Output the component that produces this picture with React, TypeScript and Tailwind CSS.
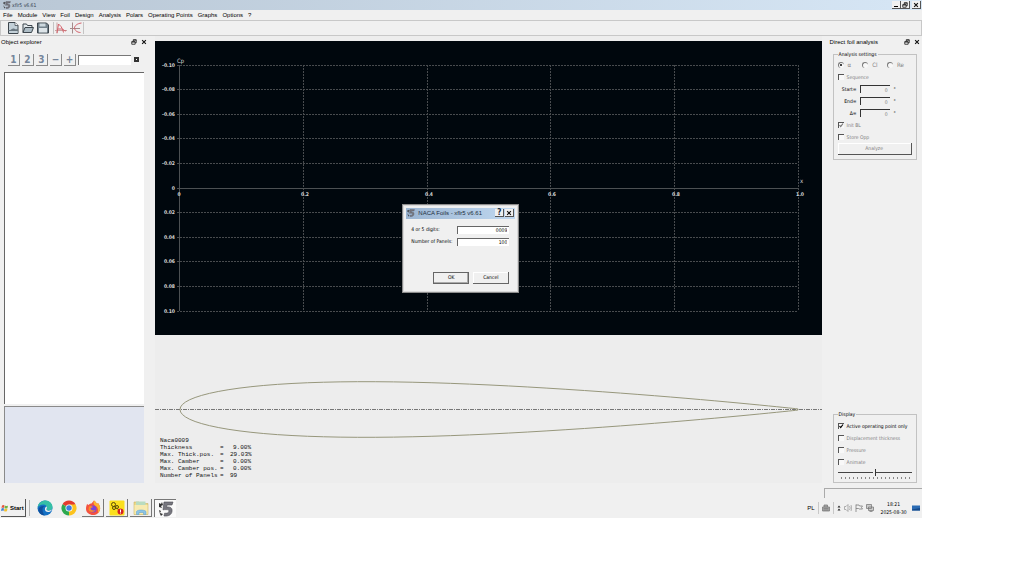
import { useState } from "react";
import type { ReactNode } from "react";
import { clsx } from "clsx";

const menuItems = ["File", "Module", "View", "Foil", "Design", "Analysis", "Polars", "Operating Points", "Graphs", "Options", "?"];

const foilInfo = [
  { label: "Thickness", value: "9.00%" },
  { label: "Max. Thick.pos.", value: "29.03%" },
  { label: "Max. Camber", value: "0.00%" },
  { label: "Max. Camber pos.", value: "0.00%" },
  { label: "Number of Panels", value: "99", left: true },
];

// graph geometry
const gridX = [25, 148, 272, 395, 519, 643];
const gridY = [24, 48, 73, 97, 122, 147, 171, 196, 220, 245, 270];
const labelsX = ["0", "0.2", "0.4", "0.6", "0.8", "1.0"];
const labelsY = ["-0.10", "-0.08", "-0.06", "-0.04", "-0.02", "0", "0.02", "0.04", "0.06", "0.08", "0.10"];

// NACA 4 digit symmetric thickness distribution
function nacaPath(thickness: number, x0: number, y0: number, chord: number) {
  const half = (x: number) =>
    5 * thickness * (0.2969 * Math.sqrt(x) - 0.126 * x - 0.3516 * x ** 2 + 0.2843 * x ** 3 - 0.1015 * x ** 4);
  const upper: string[] = [];
  const lower: string[] = [];
  for (let i = 0; i <= 50; i++) {
    const x = (1 - Math.cos((Math.PI * i) / 50)) / 2;
    const px = (x0 + x * chord).toFixed(2);
    upper.unshift(`${px} ${(y0 - half(x) * chord).toFixed(2)}`);
    lower.push(`${px} ${(y0 + half(x) * chord).toFixed(2)}`);
  }
  return `M${upper.concat(lower).join("L")}Z`;
}

function AppIcon({ className }: { className?: string }) {
  return (
    <svg viewBox="0 0 16 16" className={className} aria-hidden="true">
      <path d="M6 1h9l-1 3H9L8.500 6c4-.5 6 1 5.500 4.500C13.500 14 10 15.500 6 15l.6-2.800c2.400.3 4-.2 4.300-1.900.3-1.600-1.200-2-5.900-1.500z" fill="#77777f" stroke="#4a4a50" strokeWidth=".6" />
      <path d="M1 2l2 1 1-2 1 3-2 1 1 2-3-1zM1 9l2 1-1 2 3 1-2 2-1-2z" fill="#333" />
    </svg>
  );
}

function RestoreGlyph({ className }: { className?: string }) {
  return (
    <svg viewBox="0 0 8 8" className={className} aria-hidden="true">
      <path d="M3 3V1h4v4H5.500M3 1.500h4M1 3.500h4.500V7H1zM1 4h4.500" fill="none" stroke="#111" strokeWidth="1" />
    </svg>
  );
}

function CloseGlyph({ className }: { className?: string }) {
  return (
    <svg viewBox="0 0 8 8" className={className} aria-hidden="true">
      <path d="M1.500 1.500l5 5M6.500 1.500l-5 5" stroke="#111" strokeWidth="1.500" />
    </svg>
  );
}

function CaptionButton({ label, children }: { label: string; children: ReactNode }) {
  return (
    <button
      aria-label={label}
      className="flex h-2 w-[9px] items-center justify-center border-r border-b border-[#555] bg-[#f0f0f0] text-[8px] leading-none font-bold"
    >
      {children}
    </button>
  );
}

function DockHeader({ title }: { title: string }) {
  return (
    <div className="flex h-3 items-center gap-1 pl-[1px] font-['Liberation_Sans',sans-serif] text-[6px]">
      <h2 className="flex-1 whitespace-nowrap">{title}</h2>
      <button aria-label={`Float ${title}`}>
        <RestoreGlyph className="size-[6px]" />
      </button>
      <button aria-label={`Close ${title}`}>
        <CloseGlyph className="size-[6px]" />
      </button>
    </div>
  );
}

function Check({ label, checked = false, disabled = true }: { label: string; checked?: boolean; disabled?: boolean }) {
  return (
    <label className={clsx("flex h-3 items-center gap-[3px] whitespace-nowrap", disabled ? "text-[#808080]" : "text-black")}>
      <span className="relative flex">
        <input
          type="checkbox"
          defaultChecked={checked}
          disabled={disabled}
          className="peer size-[6px] appearance-none border-t border-l border-[#555] bg-[#f8f8f8]"
        />
        <svg viewBox="0 0 6 6" className="pointer-events-none absolute inset-0 hidden size-[6px] peer-checked:block">
          <path d="M1.500 3l1.200 1.500L5 1.500" fill="none" stroke={disabled ? "#777" : "#000"} strokeWidth="1.200" />
        </svg>
      </span>
      {label}
    </label>
  );
}

function Radio({ label, checked = false }: { label: string; checked?: boolean }) {
  return (
    <label className="flex flex-1 items-center gap-1 text-[6px] text-[#808080]">
      <span className="relative flex">
        <input
          type="radio"
          name="analysis-type"
          defaultChecked={checked}
          disabled
          className="peer size-[6px] appearance-none rounded-full border-t border-l border-[#777] bg-[#f8f8f8]"
        />
        <span className="absolute top-[2px] left-[2px] hidden size-[2px] bg-[#444] peer-checked:block" />
      </span>
      {label}
    </label>
  );
}

function DegreeField({ label }: { label: string }) {
  return (
    <div className="flex h-3 items-center gap-[3px]">
      <label htmlFor={label} className="w-[19px] text-right">{label}=</label>
      <input
        id={label}
        disabled
        defaultValue="0"
        className="h-2 w-[30px] border-t border-l border-[#333] bg-[#f0f0f0] px-[2px] text-right text-[#808080]"
      />
      <span className="pl-[1px]">°</span>
    </div>
  );
}

function TitleBar() {
  return (
    <header className="flex h-[10px] items-center gap-[1px] bg-linear-to-r from-[#b9c7d5] to-[#d6e6f5] pr-[1px] pl-[3px] text-[#33404d]">
      <AppIcon className="size-2" />
      <h1 className="flex-1">xflr5 v6.61</h1>
      <div className="flex">
        <CaptionButton label="Minimize">
          <span className="mt-1 h-[1px] w-1 bg-black" />
        </CaptionButton>
        <CaptionButton label="Restore"><RestoreGlyph className="size-[6px]" /></CaptionButton>
        <span className="w-[2px]" />
        <CaptionButton label="Close"><CloseGlyph className="size-[6px]" /></CaptionButton>
      </div>
    </header>
  );
}

function ToolBar() {
  return (
    <div className="flex h-4 items-center border border-[#c8c8c8] pl-[6px]">
      <div className="flex items-center gap-[3px] border-r border-[#c4c4c4] pr-1">
        <button aria-label="New">
          <svg viewBox="0 0 24 24" className="size-3">
            <path d="M3 1h13l6 6v16H3z" fill="#c3d0d8" stroke="#3d464d" strokeWidth="2" />
            <path d="M16 1v6h6" fill="#fff" stroke="#3d464d" strokeWidth="1.500" />
            <path d="M3 16c5 1 7-4 11-3 3 2 5 2 8 1v4H3z" fill="#69767f" />
            <path d="M4 18h17v4H4z" fill="#c3d0d8" />
          </svg>
        </button>
        <button aria-label="Open">
          <svg viewBox="0 0 24 24" className="size-3">
            <path d="M2 21V4h7l2 3h9v4" fill="#e3e9ec" stroke="#3d464d" strokeWidth="2" />
            <path d="M2 21l4-10h17l-4 10z" fill="#aebdc6" stroke="#3d464d" strokeWidth="2" />
          </svg>
        </button>
        <button aria-label="Save">
          <svg viewBox="0 0 24 24" className="size-3">
            <path d="M1 2h18l4 4v16H1z" fill="#75838d" stroke="#3d464d" strokeWidth="2" />
            <path d="M5 3h12v6H5z" fill="#cdd8de" />
            <path d="M4 12h16v9H4z" fill="#dde4e8" />
          </svg>
        </button>
      </div>
      <div className="flex items-center gap-[3px] border-r border-[#c4c4c4] pr-[1px] pl-[1px]">
        <button aria-label="Operating points">
          <svg viewBox="0 0 24 24" className="size-3" fill="none" strokeWidth="2">
            <path d="M4 1v22M0 17h24" stroke="#c9a3a3" />
            <path d="M4 22L7 4l5 5c3 6 5 8 10 9M6 14h9l2 7" stroke="#d4606a" />
          </svg>
        </button>
        <button aria-label="Polars">
          <svg viewBox="0 0 24 24" className="size-3" fill="none" strokeWidth="2">
            <path d="M5 1v22M0 13h20" stroke="#a58a8a" />
            <path d="M23 2C14 3 9 8 9 12s5 9 12 9" stroke="#d4606a" />
          </svg>
        </button>
      </div>
    </div>
  );
}

function ObjectExplorer() {
  return (
    <aside className="flex w-[155px] flex-col">
      <div className="w-[147px]">
        <DockHeader title="Object explorer" />
      </div>
      <div className="mt-[5px] flex h-[13px] items-center gap-[2px] pl-2">
        {["1", "2", "3", "−", "+"].map((item) => (
          <button
            key={item}
            className="h-3 w-3 border-r border-b border-[#8b8b8b] text-[10px] leading-[11px] font-bold text-[#75859b]"
          >
            {item}
          </button>
        ))}
        <input aria-label="Filter" className="h-[10px] w-[53px] border-t border-l border-[#777] bg-white px-1" />
        <button aria-label="Clear filter" className="ml-[1px] flex size-[5px] items-center justify-center bg-[#333]">
          <span className="size-[1px] bg-white" />
        </button>
      </div>
      <div className="mt-[6px] ml-1 w-[140px] flex-1 border-t border-l border-[#666] bg-white" />
      <div className="mt-[2px] ml-1 h-[77px] w-[140px] border-t border-l border-[#8a8a8a] bg-[#e1e5f0]" />
    </aside>
  );
}

function CpGraph() {
  return (
    <svg
      viewBox="0 0 667 294"
      preserveAspectRatio="xMinYMin slice"
      className="h-[294px] w-full bg-[#00070d] text-[5px] font-bold"
      role="img"
      aria-label="Cp graph"
    >
      <g stroke="#484b4e" strokeWidth="1" strokeDasharray="2 1" shapeRendering="crispEdges">
        {gridY.map((y, i) => (i === 5 ? null : <path key={y} d={`M22 ${y + 0.5}H643`} />))}
        {gridX.slice(1).map((x) => <path key={x} d={`M${x + 0.5} 24V270`} />)}
      </g>
      <path d="M24.500 24V270M22 147.500H643" stroke="#4c5052" shapeRendering="crispEdges" />
      <g fill="#d6d6d6">
        {gridY.map((y, i) => (
          <text key={y} x={20} y={y + 2} textAnchor="end">{labelsY[i]}</text>
        ))}
        {gridX.map((x, i) => (
          <text key={x} x={i === 0 ? x - 1 : x + 2} y={155} textAnchor="middle">{labelsX[i]}</text>
        ))}
        <text x={22} y={22} className="text-[6px] font-normal">Cp</text>
        <text x={645} y={142} className="text-[6px] font-normal">x</text>
      </g>
    </svg>
  );
}

function FoilView() {
  return (
    <section className="flex-1">
      <svg viewBox="0 0 667 102" preserveAspectRatio="xMinYMin slice" className="h-[102px] w-full overflow-visible" role="img" aria-label="NACA 0009">
        <path d="M0 74.500H667" stroke="#777" strokeDasharray="4 1 1 1" shapeRendering="crispEdges" />
        <path d={nacaPath(0.09, 25, 74.5, 618)} fill="none" stroke="#97977c" strokeWidth="1" />
      </svg>
      <div className="pl-[5px] font-['Liberation_Mono',monospace] text-[6px] leading-[7px] text-[#111]">
        <p>Naca0009</p>
        {foilInfo.map(({ label, value, left }) => (
          <p key={label} className="flex">
            <span className="w-[60px]">{label}</span>
            <span className="w-[10px]">=</span>
            <span className={clsx("w-[21px]", !left && "text-right")}>{value}</span>
          </p>
        ))}
      </div>
    </section>
  );
}

function AnalysisDock() {
  const [speed, setSpeed] = useState(50);

  return (
    <aside className="flex w-[100px] flex-col pr-[2px] pl-[7px]">
      <DockHeader title="Direct foil analysis" />
      <fieldset className="mt-[2px] mr-[3px] ml-1 border border-[#c2c2c2] px-1 pt-[1px] pb-1">
        <legend className="h-2 px-[1px] leading-2">Analysis settings</legend>
        <div className="flex h-3 items-center">
          <Radio label="α" checked />
          <Radio label="Cl" />
          <Radio label="Re" />
        </div>
        <Check label="Sequence" />
        <DegreeField label="Start" />
        <DegreeField label="End" />
        <DegreeField label="Δ" />
        <Check label="Init BL" checked />
        <Check label="Store Opp" />
        <button disabled className="block h-3 w-full border-r border-b border-[#555] text-[#808080] shadow-[inset_1px_1px_#ffffff]">
          Analyze
        </button>
      </fieldset>
      <fieldset className="mt-auto mr-[3px] ml-1 border border-[#c2c2c2] px-1 pt-[2px] pb-[2px]">
        <legend className="h-2 px-[1px] leading-2">Display</legend>
        <Check label="Active operating point only" checked disabled={false} />
        <Check label="Displacement thickness" />
        <Check label="Pressure" />
        <Check label="Animate" />
        <input
          type="range"
          aria-label="Animation speed"
          value={speed}
          onChange={(e) => setSpeed(Number(e.target.value))}
          className="block h-2 w-full appearance-none bg-[linear-gradient(#444,#444)] bg-[length:100%_1px] bg-center bg-no-repeat [&::-webkit-slider-thumb]:h-[7px] [&::-webkit-slider-thumb]:w-[3px] [&::-webkit-slider-thumb]:appearance-none [&::-webkit-slider-thumb]:border-r [&::-webkit-slider-thumb]:border-[#333] [&::-webkit-slider-thumb]:bg-[#f0f0f0]"
        />
        <svg viewBox="0 0 72 4" className="h-1 w-full" aria-hidden="true">
          <path d="M2 1.500H71" stroke="#888" strokeWidth="2" strokeDasharray="1 3" shapeRendering="crispEdges" />
        </svg>
      </fieldset>
    </aside>
  );
}

function NacaDialog() {
  return (
    <div
      role="dialog"
      aria-label="NACA Foils"
      className="w-[117px] border border-[#8c8c8c] bg-[#f0f0f0] p-[3px] shadow-[inset_0_0_0_1px_#d8d8d8]"
    >
      <div className="flex h-[11px] items-center gap-[3px] bg-linear-to-r from-[#9bb5d2] to-[#c0d8f0] px-[1px] text-[#1c2c3c]">
        <AppIcon className="size-2" />
        <h2 className="flex-1 font-['Liberation_Sans',sans-serif] text-[6px] whitespace-nowrap">NACA Foils - xflr5 v6.61</h2>
        <div className="flex gap-[1px]">
          <CaptionButton label="Help">?</CaptionButton>
          <CaptionButton label="Close dialog"><CloseGlyph className="size-[6px]" /></CaptionButton>
        </div>
      </div>
      <form className="pt-[5px] pr-[6px] pb-[5px] pl-[5px]" onSubmit={(e) => e.preventDefault()}>
        <div className="flex h-3 items-center">
          <label htmlFor="digits" className="flex-1">4 or 5 digits:</label>
          <input id="digits" defaultValue="0009" className="h-2 w-[52px] border-t border-l border-[#666] bg-white px-[2px] text-right" />
        </div>
        <div className="flex h-3 items-center">
          <label htmlFor="panels" className="flex-1">Number of Panels:</label>
          <input id="panels" defaultValue="100" className="h-2 w-[52px] border-t border-l border-[#666] bg-white px-[2px] text-right" />
        </div>
        <div className="mt-6 flex justify-end gap-1">
          <button className="h-3 w-9 border border-[#666] shadow-[inset_-1px_-1px_#aaaaaa]">OK</button>
          <button className="h-3 w-9 border-r border-b border-[#666] shadow-[inset_1px_1px_#ffffff]">Cancel</button>
        </div>
      </form>
    </div>
  );
}

function TaskButton({ label, open, active, children }: { label: string; open?: boolean; active?: boolean; children: ReactNode }) {
  return (
    <button
      aria-label={label}
      className={clsx(
        "flex h-[18px] w-[22px] items-center justify-center border-[#777]",
        open && "border-r border-b",
        active && "border-t border-l bg-[#fafafa]"
      )}
    >
      {children}
    </button>
  );
}

function TaskBar() {
  return (
    <footer className="flex h-5 items-center bg-[#f0f0f0] pr-[2px] pl-[1px]">
      <button className="flex h-[18px] w-[25px] items-center gap-[1px] border-r border-b border-[#555] font-['Liberation_Sans',sans-serif] text-[6px] font-bold">
        <svg viewBox="0 0 16 16" className="size-2" aria-hidden="true">
          <path d="M2 3q3-2 5 0L6 8q-2-2-5 0z" fill="#e5533d" />
          <path d="M8 3q3 2 6 0l-1 5q-3 2-6 0z" fill="#6fb544" />
          <path d="M1 9q3-2 5 0l-1 5q-2-2-5 0z" fill="#3d7fd0" />
          <path d="M7 9q3 2 6 0l-1 5q-3 2-6 0z" fill="#f3c032" />
        </svg>
        Start
      </button>
      <span className="mx-[3px] h-4 w-[1px] bg-[#b5b5b5]" />
      <nav className="ml-[1px] flex gap-[2px]">
        <TaskButton label="Edge">
          <svg viewBox="0 0 32 32" className="size-4">
            <circle cx="16" cy="16" r="15" fill="#1370c4" />
            <path d="M1 15C3 5 10 1 17 1c8 0 14 6 14 13 0 5-4 7-8 7-3 0-4-1-4-2s1-2 1-4c0-3-3-6-7-6-6 0-11 3-12 6z" fill="#35bfa6" />
            <path d="M11 19c0-4 2-6 5-7-8-1-14 3-13 10 2 6 8 9 13 9-3-2-5-7-5-12z" fill="#0f4f9c" />
            <path d="M19 19c0 2 3 3 6 2 3 0 5-2 6-4-1 4-3 6-7 7-6 1-9-3-8-7 0-2 2-4 4-4 0 3-1 4-1 6z" fill="#f0f0f0" />
          </svg>
        </TaskButton>
        <TaskButton label="Chrome">
          <svg viewBox="0 0 32 32" className="size-4">
            <path d="M16 16L3 8.500a15 15 0 0 1 26 0z" fill="#e33b2e" />
            <path d="M16 16L3 8.500a15 15 0 0 0 13 22.500z" fill="#2da94f" />
            <path d="M16 16v15A15 15 0 0 0 29 8.500z" fill="#fcc31e" />
            <path d="M16 9h13l-6 11z" fill="#fcc31e" />
            <circle cx="16" cy="16" r="7" fill="#fff" />
            <circle cx="16" cy="16" r="5.500" fill="#3d7de0" />
          </svg>
        </TaskButton>
        <TaskButton label="Firefox" open>
          <svg viewBox="0 0 32 32" className="size-4">
            <path d="M4 8l3 2c2-3 5-3 6-3l5-6c4 3 5 5 6 7l2-2c3 4 5 8 4 13-1 7-7 11-14 11S2 25 2 18c0-4 1-7 2-10z" fill="#f4523f" />
            <path d="M18 1c4 3 5 5 6 7l2-2c3 4 5 8 4 13-1 3-2 5-4 7 1-8-1-13-6-15-3-3-4-6-2-10z" fill="#fdb52f" />
            <circle cx="16" cy="18" r="7" fill="#7a46d8" />
            <path d="M8 13c3-2 6-1 8 1-2 2-5 1-5 3 1 4 6 5 10 3-2 5-12 6-14-1z" fill="#f98a2b" />
          </svg>
        </TaskButton>
        <TaskButton label="Tools" open>
          <svg viewBox="0 0 32 32" className="size-4">
            <rect x="1" y="1" width="30" height="30" rx="2" fill="#fbdf1d" />
            <g fill="none" stroke="#5a4a08" strokeWidth="2">
              <circle cx="9" cy="9" r="4" />
              <circle cx="16" cy="14" r="3" />
              <circle cx="10" cy="16" r="3" />
              <path d="M17 17l3 4" />
            </g>
            <circle cx="23" cy="23" r="6" fill="#d51f26" />
            <path d="M23 19v5M23 25v2" stroke="#fff" strokeWidth="2" />
          </svg>
        </TaskButton>
        <TaskButton label="Explorer" open>
          <svg viewBox="0 0 32 32" className="size-4">
            <path d="M2 4h10l2 3h16v22H2z" fill="#ecd98a" stroke="#c5aa50" />
            <path d="M6 3h19v8H6z" fill="#b9dcc0" />
            <path d="M3 10h26v18H3z" fill="#f7eab0" />
            <path d="M7 23c2-4 16-4 19 0v6h-5v-4h-9v4H7z" fill="#8cc4e6" stroke="#5a9fce" />
          </svg>
        </TaskButton>
        <TaskButton label="xflr5" active><AppIcon className="size-4" /></TaskButton>
      </nav>
      <div className="ml-auto flex items-center gap-[3px]">
        <span className="font-['Liberation_Sans',sans-serif] text-[6px]">PL</span>
        <span className="h-3 w-[1px] bg-[#c8c8c8]" />
        <svg viewBox="0 0 16 16" className="size-2" aria-hidden="true">
          <path d="M4 6V2h7v4M1 6h14v8H1z" fill="#aaa" stroke="#777" strokeWidth="1.500" />
          <path d="M3 9h10M3 12h10" stroke="#666" />
        </svg>
        <span className="h-3 w-[1px] bg-[#c8c8c8]" />
        <svg viewBox="0 0 8 12" className="h-[6px] w-1" aria-hidden="true">
          <path d="M1 5l3-4 3 4zM1 11l3-4 3 4z" fill="#222" />
        </svg>
        <svg viewBox="0 0 16 16" className="size-2" fill="none" stroke="#999" strokeWidth="1.500" aria-hidden="true">
          <path d="M1 5h3l4-4v14l-4-4H1zM11 4q3 4 0 8M14 2q3 6 0 12" />
        </svg>
        <svg viewBox="0 0 16 16" className="size-2" fill="none" stroke="#777" strokeWidth="1.500" aria-hidden="true">
          <path d="M2 1v15M2 2h6l1 2h6l-2 3 2 3H8L7 9H2" />
        </svg>
        <svg viewBox="0 0 16 16" className="size-2" aria-hidden="true">
          <path d="M1 1h10v8H1zM5 6h10v7H5zM7 15h6" fill="#ccc" stroke="#777" strokeWidth="1.500" />
        </svg>
        <div className="ml-[2px] w-[30px] text-center leading-2 whitespace-nowrap">
          <p>18:21</p>
          <p>2025-08-30</p>
        </div>
        <svg viewBox="0 0 16 12" className="h-[6px] w-2" aria-hidden="true">
          <path d="M0 1h16v10H0z" fill="#2c6cb4" />
          <path d="M0 9l16-3v5H0z" fill="#174a8a" />
        </svg>
      </div>
    </footer>
  );
}

export default function App() {
  return (
    <div className="min-h-screen bg-white">
      <div className="flex h-[90vh] w-[90vw] flex-col bg-[#f0f0f0] font-['DejaVu_Sans_Condensed','DejaVu_Sans',sans-serif] text-[5px] leading-none text-black">
        <div className="relative flex flex-1 flex-col">
          <TitleBar />
          <nav className="flex h-[10px] items-center gap-[5px] pl-[3px] font-['Liberation_Sans',sans-serif] text-[6px]">
            {menuItems.map((item) => <button key={item}>{item}</button>)}
          </nav>
          <ToolBar />
          <main className="flex flex-1">
            <ObjectExplorer />
            <div className="flex min-w-0 flex-1 flex-col bg-[#ededed] pt-[5px]">
              <CpGraph />
              <FoilView />
            </div>
            <AnalysisDock />
          </main>
          <div className="flex h-[15px] justify-end pt-[5px]">
            <div className="w-[98px] border-t border-l border-[#aaa]" />
          </div>
          <div className="absolute inset-0 flex items-center justify-center pb-[2px]">
            <NacaDialog />
          </div>
        </div>
        <TaskBar />
      </div>
    </div>
  );
}
